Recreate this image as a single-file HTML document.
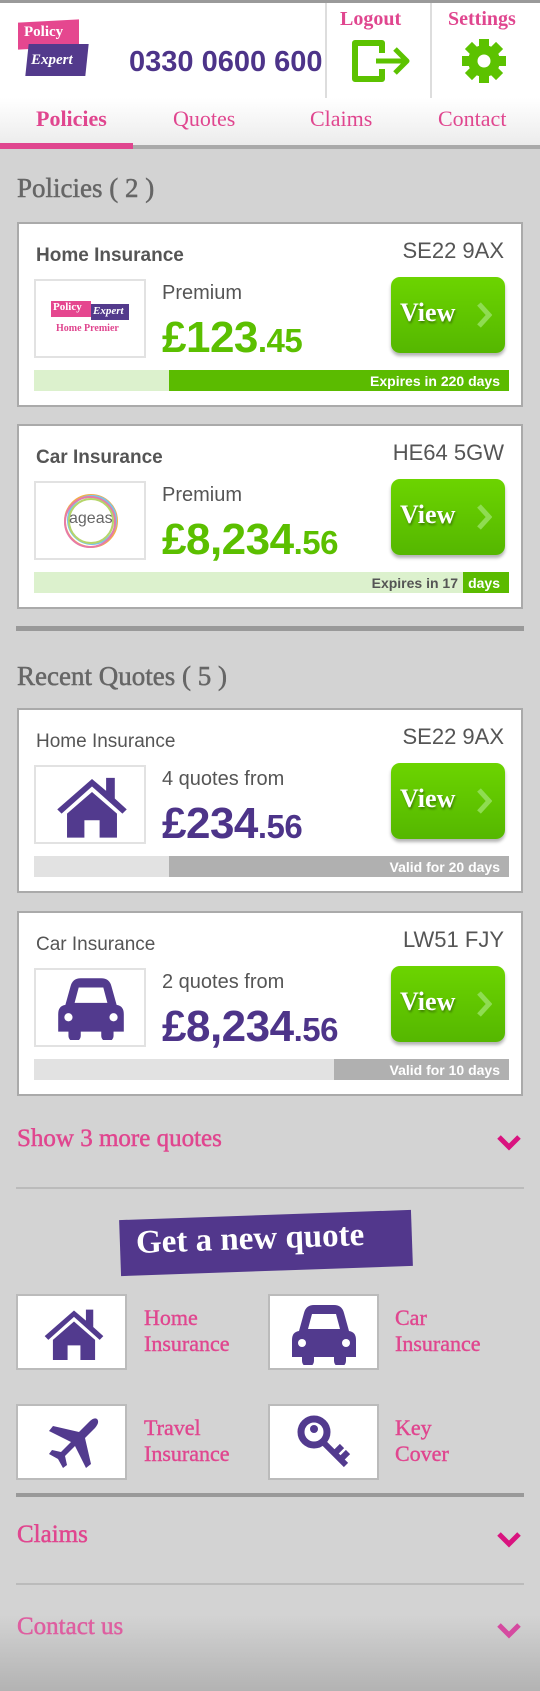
<!DOCTYPE html>
<html><head><meta charset="utf-8"><style>
*{margin:0;padding:0;box-sizing:border-box}
body{width:540px;height:1691px;background:#d3d3d3;position:relative;overflow:hidden;font-family:"Liberation Sans",sans-serif}
.a{position:absolute}
.serif{font-family:"Liberation Serif",serif}
.card{position:absolute;left:17px;width:506px;height:185px;background:#fff;border:2px solid #aaa}
.ttl{position:absolute;left:17px;font-size:19px;color:#555;line-height:1}
.pc{position:absolute;right:17px;font-size:22px;color:#555;line-height:1}
.lbox{position:absolute;left:15px;width:112px;height:79px;border:2px solid #e2e2e2;background:#fff}
.lab{position:absolute;left:143px;font-size:20px;color:#555;line-height:1}
.price{position:absolute;left:143px;font-weight:bold;font-size:44px;line-height:1;letter-spacing:-0.5px}
.price small{font-size:33px}
.view{position:absolute;left:372px;width:114px;height:76px;border-radius:9px;background:linear-gradient(#6cd400,#55b700);box-shadow:0 3px 3px rgba(0,0,0,.3)}
.view span{position:absolute;left:9px;top:21px;font-family:"Liberation Serif",serif;font-weight:bold;font-size:26px;color:#fff;text-shadow:1px 2px 2px rgba(0,0,0,.35)}
.view svg{position:absolute;left:85px;top:25px}
.bar{position:absolute;left:15px;width:475px;height:21px}
.bar i{position:absolute;top:0;bottom:0;right:0}
.bar b{position:absolute;right:9px;top:4px;font-size:14px;color:#fff;line-height:1}
.pink{color:#e0468f}
.tile{position:absolute;width:111px;height:76px;background:#fff;border:2px solid #bbb}
.tt{position:absolute;font-family:"Liberation Serif",serif;font-size:22px;color:#e0468f;line-height:26px;-webkit-text-stroke:0.4px #e0468f}
.hd{position:absolute;left:17px;font-family:"Liberation Serif",serif;font-size:27px;color:#666;-webkit-text-stroke:0.5px #666}
.acc{position:absolute;left:17px;font-family:"Liberation Serif",serif;font-size:25px;color:#e0468f;-webkit-text-stroke:0.5px #e0468f}
.chev{position:absolute;left:496px}
</style></head><body>
<!-- header -->
<div class="a" style="left:0;top:0;width:540px;height:3px;background:#9a9a9a"></div>
<div class="a" style="left:0;top:3px;width:540px;height:95px;background:#fff"></div>
<div class="a" style="left:18px;top:21px;width:61px;height:27px;background:#e5478f;transform:skewY(-3deg)"></div>
<div class="a serif" style="left:24px;top:24px;font-size:15px;font-weight:bold;color:#fff">Policy</div>
<div class="a" style="left:27px;top:44px;width:60px;height:32px;background:#533a8c;transform:skewX(-6deg)"></div>
<div class="a serif" style="left:31px;top:52px;font-size:15px;font-weight:bold;font-style:italic;color:#fff">Expert</div>
<div class="a" style="left:129px;top:48px;font-size:29px;font-weight:bold;color:#4d3489;line-height:1">0330 0600 600</div>
<div class="a" style="left:325px;top:3px;width:2px;height:95px;background:#ddd"></div>
<div class="a" style="left:430px;top:3px;width:2px;height:95px;background:#ddd"></div>
<div class="a serif" style="left:340px;top:8px;font-size:20px;font-weight:bold;color:#e0468f">Logout</div>
<div class="a serif" style="left:448px;top:8px;font-size:20px;font-weight:bold;color:#e0468f">Settings</div>
<svg class="a" style="left:350px;top:39px" width="62" height="44" viewBox="0 0 62 44"><path d="M32 14V4H5v36h27V30" fill="none" stroke="#5cc200" stroke-width="6" stroke-linejoin="round"/><path d="M26 22h30M45 10l12 12-12 12" fill="none" stroke="#5cc200" stroke-width="5" stroke-linejoin="round"/></svg>
<svg class="a" style="left:461px;top:38px" width="46" height="46" viewBox="-23 -23 46 46"><g fill="#5cc200"><circle r="16"/><rect x="-5" y="-22" width="10" height="44"/><rect x="-5" y="-22" width="10" height="44" transform="rotate(45)"/><rect x="-5" y="-22" width="10" height="44" transform="rotate(90)"/><rect x="-5" y="-22" width="10" height="44" transform="rotate(135)"/></g><circle r="6.5" fill="#fff"/></svg>
<!-- nav -->
<div class="a" style="left:0;top:98px;width:540px;height:47px;background:linear-gradient(#fff,#ececec)"></div>
<div class="a" style="left:0;top:145px;width:540px;height:4px;background:#aaa"></div>
<div class="a" style="left:0;top:143px;width:133px;height:6px;background:#e0468f"></div>
<div class="a serif pink" style="left:36px;top:106px;font-size:22px;font-weight:bold">Policies</div>
<div class="a serif pink" style="left:173px;top:106px;font-size:22px">Quotes</div>
<div class="a serif pink" style="left:310px;top:106px;font-size:22px">Claims</div>
<div class="a serif pink" style="left:438px;top:106px;font-size:22px">Contact</div>

<div class="hd" style="top:173px">Policies ( 2 )</div>

<!-- policy 1 -->
<div class="card" style="top:222px">
 <div class="ttl" style="top:22px;font-weight:bold">Home Insurance</div>
 <div class="pc" style="top:16px">SE22 9AX</div>
 <div class="lbox" style="top:55px">
  <div class="a" style="left:15px;top:20px;width:40px;height:16px;background:#e5478f"></div>
  <div class="a serif" style="left:17px;top:20px;font-size:11px;font-weight:bold;color:#fff">Policy</div>
  <div class="a" style="left:55px;top:23px;width:38px;height:16px;background:#533a8c"></div>
  <div class="a serif" style="left:57px;top:24px;font-size:11px;font-weight:bold;font-style:italic;color:#fff">Expert</div>
  <div class="a serif" style="left:20px;top:42px;font-size:10px;color:#e0468f;font-weight:bold">Home Premier</div>
 </div>
 <div class="lab" style="top:59px">Premium</div>
 <div class="price" style="top:92px;color:#5bbf00">£123<small>.45</small></div>
 <div class="view" style="top:53px"><span>View</span><svg width="16" height="26"><path d="M3 2l10 11-10 11" fill="none" stroke="#8fdc52" stroke-width="5"/></svg></div>
 <div class="bar" style="top:146px;background:#dcf1cd"><i style="left:135px;background:#5bbb00"></i><b>Expires in 220 days</b></div>
</div>
<!-- policy 2 -->
<div class="card" style="top:424px">
 <div class="ttl" style="top:22px;font-weight:bold">Car Insurance</div>
 <div class="pc" style="top:16px">HE64 5GW</div>
 <div class="lbox" style="top:55px">
  <svg class="a" style="left:25px;top:8px" width="60" height="60"><g fill="none" stroke-width="2"><circle cx="30" cy="30" r="26" stroke="#f2b04a"/><circle cx="31" cy="29" r="24" stroke="#7ac3e8"/><circle cx="29" cy="31" r="25" stroke="#e77aa7"/><circle cx="30" cy="30" r="22" stroke="#b5d56a"/></g></svg>
  <div class="a" style="left:33px;top:27px;font-size:16px;color:#666">ageas</div>
 </div>
 <div class="lab" style="top:59px">Premium</div>
 <div class="price" style="top:92px;color:#5bbf00">£8,234<small>.56</small></div>
 <div class="view" style="top:53px"><span>View</span><svg width="16" height="26"><path d="M3 2l10 11-10 11" fill="none" stroke="#8fdc52" stroke-width="5"/></svg></div>
 <div class="bar" style="top:146px;background:#dcf1cd"><i style="left:429px;background:#5bbb00"></i><b style="color:#555;right:51px">Expires in 17</b><b>days</b></div>
</div>
<div class="a" style="left:16px;top:626px;width:508px;height:5px;background:#999"></div>

<div class="hd" style="top:661px">Recent Quotes ( 5 )</div>

<!-- quote 1 -->
<div class="card" style="top:708px">
 <div class="ttl" style="top:22px">Home Insurance</div>
 <div class="pc" style="top:16px">SE22 9AX</div>
 <div class="lbox" style="top:55px">
  <svg class="a" style="left:18px;top:4px" width="76" height="68" viewBox="0 0 70 60"><path d="M35 6L3 34l4 4 28-25 28 25 4-4-11-10V5h-8v12z" fill="#523a8e"/><path d="M12 38L35 18l23 20v22H42V44H28v16H12z" fill="#523a8e"/></svg>
 </div>
 <div class="lab" style="top:59px">4 quotes from</div>
 <div class="price" style="top:92px;color:#4d3489">£234<small>.56</small></div>
 <div class="view" style="top:53px"><span>View</span><svg width="16" height="26"><path d="M3 2l10 11-10 11" fill="none" stroke="#8fdc52" stroke-width="5"/></svg></div>
 <div class="bar" style="top:146px;background:#e2e2e2"><i style="left:135px;background:#b0b0b0"></i><b>Valid for 20 days</b></div>
</div>
<!-- quote 2 -->
<div class="card" style="top:911px">
 <div class="ttl" style="top:22px">Car Insurance</div>
 <div class="pc" style="top:16px">LW51 FJY</div>
 <div class="lbox" style="top:55px">
  <svg class="a" style="left:14px;top:6px" width="82" height="64" viewBox="0 0 80 62"><path d="M20 10q2-8 10-8h20q8 0 10 8l5 18q7 1 7 9v17H62v4a6 6 0 0 1-12 0v-4H30v4a6 6 0 0 1-12 0v-4H8V37q0-8 7-9zM24 26h32l-4-15H28z" fill="#523a8e" fill-rule="evenodd"/><circle cx="18" cy="40" r="4" fill="#fff"/><circle cx="62" cy="40" r="4" fill="#fff"/></svg>
 </div>
 <div class="lab" style="top:59px">2 quotes from</div>
 <div class="price" style="top:92px;color:#4d3489">£8,234<small>.56</small></div>
 <div class="view" style="top:53px"><span>View</span><svg width="16" height="26"><path d="M3 2l10 11-10 11" fill="none" stroke="#8fdc52" stroke-width="5"/></svg></div>
 <div class="bar" style="top:146px;background:#e2e2e2"><i style="left:300px;background:#b0b0b0"></i><b>Valid for 10 days</b></div>
</div>

<div class="acc" style="top:1125px">Show 3 more quotes</div>
<svg class="chev" style="top:1133px" width="26" height="20"><path d="M3 4l10 10 10-10" fill="none" stroke="#d9137f" stroke-width="5"/></svg>
<div class="a" style="left:16px;top:1187px;width:508px;height:2px;background:#bbb"></div>

<div class="a" style="left:120px;top:1215px;width:292px;height:56px;background:#52378c;transform:rotate(-2deg)"></div>
<div class="a serif" style="left:136px;top:1221px;font-size:33px;font-weight:bold;color:#fff;transform:rotate(-2deg)">Get a new quote</div>

<div class="tile" style="left:16px;top:1294px"><svg class="a" style="left:21px;top:9px" width="70" height="55" viewBox="0 0 70 60"><path d="M35 6L3 34l4 4 28-25 28 25 4-4-11-10V5h-8v12z" fill="#523a8e"/><path d="M12 38L35 18l23 20v22H42V44H28v16H12z" fill="#523a8e"/></svg></div>
<div class="tt" style="left:144px;top:1305px">Home<br>Insurance</div>
<div class="tile" style="left:268px;top:1294px"><svg class="a" style="left:14px;top:7px" width="80" height="62" viewBox="0 0 80 62"><path d="M20 10q2-8 10-8h20q8 0 10 8l5 18q7 1 7 9v17H62v4a6 6 0 0 1-12 0v-4H30v4a6 6 0 0 1-12 0v-4H8V37q0-8 7-9zM24 26h32l-4-15H28z" fill="#523a8e" fill-rule="evenodd"/><circle cx="18" cy="40" r="4" fill="#fff"/><circle cx="62" cy="40" r="4" fill="#fff"/></svg></div>
<div class="tt" style="left:395px;top:1305px">Car<br>Insurance</div>
<div class="tile" style="left:16px;top:1404px"><svg class="a" style="left:27px;top:10px" width="56" height="54" viewBox="0 0 56 54"><path d="M52 3q3 3-2 9L40 22l6 26-5 4-11-22-10 10 2 9-4 3-5-9-9-5 3-4 9 2 10-10L4 15l4-5 26 6L44 6q5-5 8-3z" fill="#523a8e"/></svg></div>
<div class="tt" style="left:144px;top:1415px">Travel<br>Insurance</div>
<div class="tile" style="left:268px;top:1404px"><svg class="a" style="left:24px;top:8px" width="64" height="60" viewBox="0 0 64 60"><circle cx="20" cy="18" r="13" fill="none" stroke="#523a8e" stroke-width="7"/><path d="M28 27l24 24M42 38l6-6M48 44l6-6" stroke="#523a8e" stroke-width="6" fill="none"/><circle cx="20" cy="15" r="4" fill="#523a8e"/></svg></div>
<div class="tt" style="left:395px;top:1415px">Key<br>Cover</div>

<div class="a" style="left:16px;top:1493px;width:508px;height:4px;background:#999"></div>
<div class="acc" style="top:1521px">Claims</div>
<svg class="chev" style="top:1530px" width="26" height="20"><path d="M3 4l10 10 10-10" fill="none" stroke="#d9137f" stroke-width="5"/></svg>
<div class="a" style="left:16px;top:1583px;width:508px;height:2px;background:#bbb"></div>
<div class="a" style="left:0;top:1615px;width:540px;height:76px;background:linear-gradient(#d3d3d3,#b3b3b3)"></div>
<div class="acc" style="top:1613px;color:#de5ea0;-webkit-text-stroke:0.5px #de5ea0">Contact us</div>
<svg class="chev" style="top:1621px" width="26" height="20"><path d="M3 4l10 10 10-10" fill="none" stroke="#d54aa0" stroke-width="5"/></svg>
</body></html>
